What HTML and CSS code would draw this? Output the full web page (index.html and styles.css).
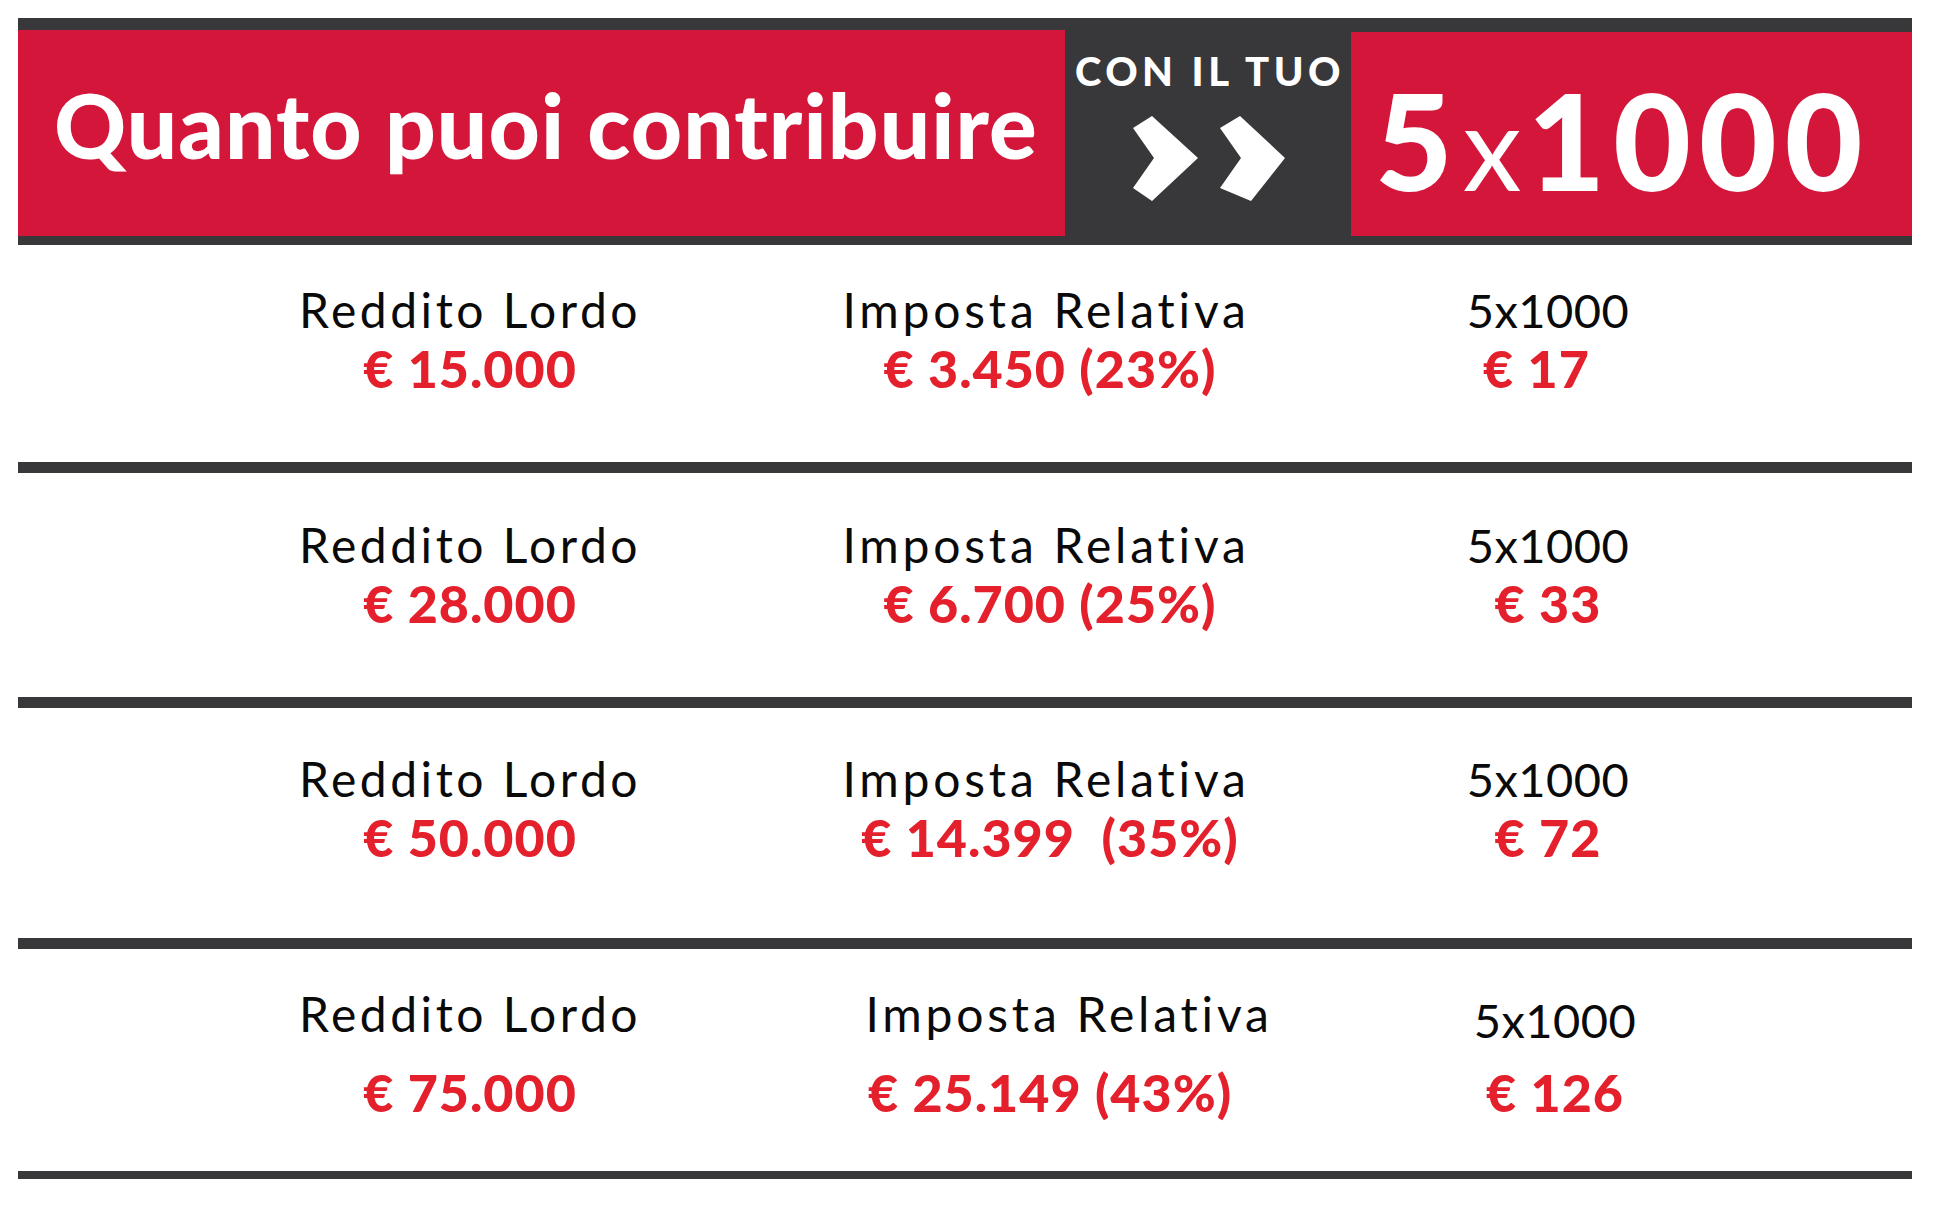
FILE: index.html
```html
<!DOCTYPE html>
<html lang="it">
<head>
<meta charset="utf-8">
<title>Quanto puoi contribuire con il tuo 5x1000</title>
<link rel="stylesheet" href="styles.css">
</head>
<body>
<div class="table">
  <header class="banner">
    <div class="banner-title">Quanto puoi contribuire</div>
    <div class="banner-mid">
      <div class="banner-con">CON IL TUO</div>
      <svg class="chevrons" width="152" height="85" viewBox="0 0 152 85">
        <polygon points="0,12 19,0 65,42 19,85 0,72 21,42" fill="#fff"/>
        <polygon points="87,12 107,0 152,42 118,85 87,72 108,42" fill="#fff"/>
      </svg>
    </div>
    <div class="banner-num"><span class="big">5</span><span class="x">x</span><span class="big">1000</span></div>
  </header>

  <section class="row row-1">
    <div class="cell c1"><div class="label">Reddito Lordo</div><div class="value">€ 15.000</div></div>
    <div class="cell c2"><div class="label">Imposta Relativa</div><div class="value">€ 3.450 (23%)</div></div>
    <div class="cell c3"><div class="label label-num">5x1000</div><div class="value value-left">€ 17</div></div>
  </section>

  <section class="row row-2">
    <div class="cell c1"><div class="label">Reddito Lordo</div><div class="value">€ 28.000</div></div>
    <div class="cell c2"><div class="label">Imposta Relativa</div><div class="value">€ 6.700 (25%)</div></div>
    <div class="cell c3"><div class="label label-num">5x1000</div><div class="value">€ 33</div></div>
  </section>

  <section class="row row-3">
    <div class="cell c1"><div class="label">Reddito Lordo</div><div class="value">€ 50.000</div></div>
    <div class="cell c2"><div class="label">Imposta Relativa</div><div class="value">€ 14.399&nbsp; (35%)</div></div>
    <div class="cell c3"><div class="label label-num">5x1000</div><div class="value">€ 72</div></div>
  </section>

  <section class="row row-4">
    <div class="cell c1"><div class="label">Reddito Lordo</div><div class="value">€ 75.000</div></div>
    <div class="cell c2"><div class="label label-shift">Imposta Relativa</div><div class="value">€ 25.149 (43%)</div></div>
    <div class="cell c3 c3-low"><div class="label label-num">5x1000</div><div class="value">€ 126</div></div>
  </section>
</div>
</body>
</html>
```

FILE: styles.css
```css
* { box-sizing: border-box; }

html, body {
  margin: 0;
  padding: 0;
  background: #ffffff;
}

body {
  padding: 18px 0 0 18px;
  font-family: "Lato", "Liberation Sans", sans-serif;
}

.table {
  width: 1894px;
}

/* ---------- banner ---------- */
.banner {
  display: flex;
  background: #38383b;
  padding: 12px 0 9px;
  height: 227px;
}

.banner-title {
  width: 1047px;
  background: #d4163a;
  color: #ffffff;
  font-weight: 900;
  font-size: 89px;
  line-height: 190px;
  padding: 0 0 16px 36px;
  letter-spacing: 1.1px;
  white-space: nowrap;
}

.banner-mid {
  width: 286px;
  display: flex;
  flex-direction: column;
  align-items: center;
}

.banner-con {
  margin-top: 18px;
  font-weight: 900;
  font-size: 40px;
  line-height: 46px;
  color: #ffffff;
  letter-spacing: 4.5px;
  margin-left: 4px;
}

.chevrons {
  margin-top: 22px;
  margin-left: 2px;
}

.banner-num {
  width: 561px;
  margin-top: 2px;
  background: #d4163a;
  color: #ffffff;
  display: flex;
  align-items: baseline;
  padding: 12px 0 0 24px;
  line-height: 192px;
  white-space: nowrap;
}

.banner-num .big {
  font-weight: 900;
  font-size: 134px;
  letter-spacing: 8px;
}

.banner-num .x {
  font-weight: 400;
  font-size: 118px;
  margin: 0 6px 0 2px;
}

/* ---------- rows ---------- */
.row {
  display: grid;
  grid-template-columns: 400px 760px 236px;
  padding-left: 252px;
  border-bottom: 11px solid #38383b;
}

.row-1 { height: 228px; padding-top: 37px; }
.row-2 { height: 235px; padding-top: 44px; }
.row-3 { height: 241px; padding-top: 43px; }
.row-4 { height: 230px; padding-top: 37px; border-bottom-width: 8px; }

.cell {
  display: flex;
  flex-direction: column;
  align-items: center;
  text-align: center;
}

.c2 .label { margin-right: 8px; letter-spacing: 3.8px; }

.label {
  font-weight: 400;
  font-size: 48px;
  line-height: 56px;
  letter-spacing: 3.5px;
  color: #0a0a0a;
  white-space: nowrap;
}

.label-num {
  font-size: 47px;
  letter-spacing: 0.5px;
}

.value {
  font-weight: 900;
  font-size: 52px;
  line-height: 60px;
  letter-spacing: 1px;
  color: #e3202b;
  white-space: nowrap;
}

.value-left {
  align-self: flex-start;
  margin-left: 53px;
}

.row-4 .value { margin-top: 20px; }
.row-4 .c2 .label-shift { margin-left: 38px; margin-right: 0; }
.c3-low { padding-top: 6px; padding-left: 14px; }
.row-4 .c3-low .value { margin-top: 14px; }
```
